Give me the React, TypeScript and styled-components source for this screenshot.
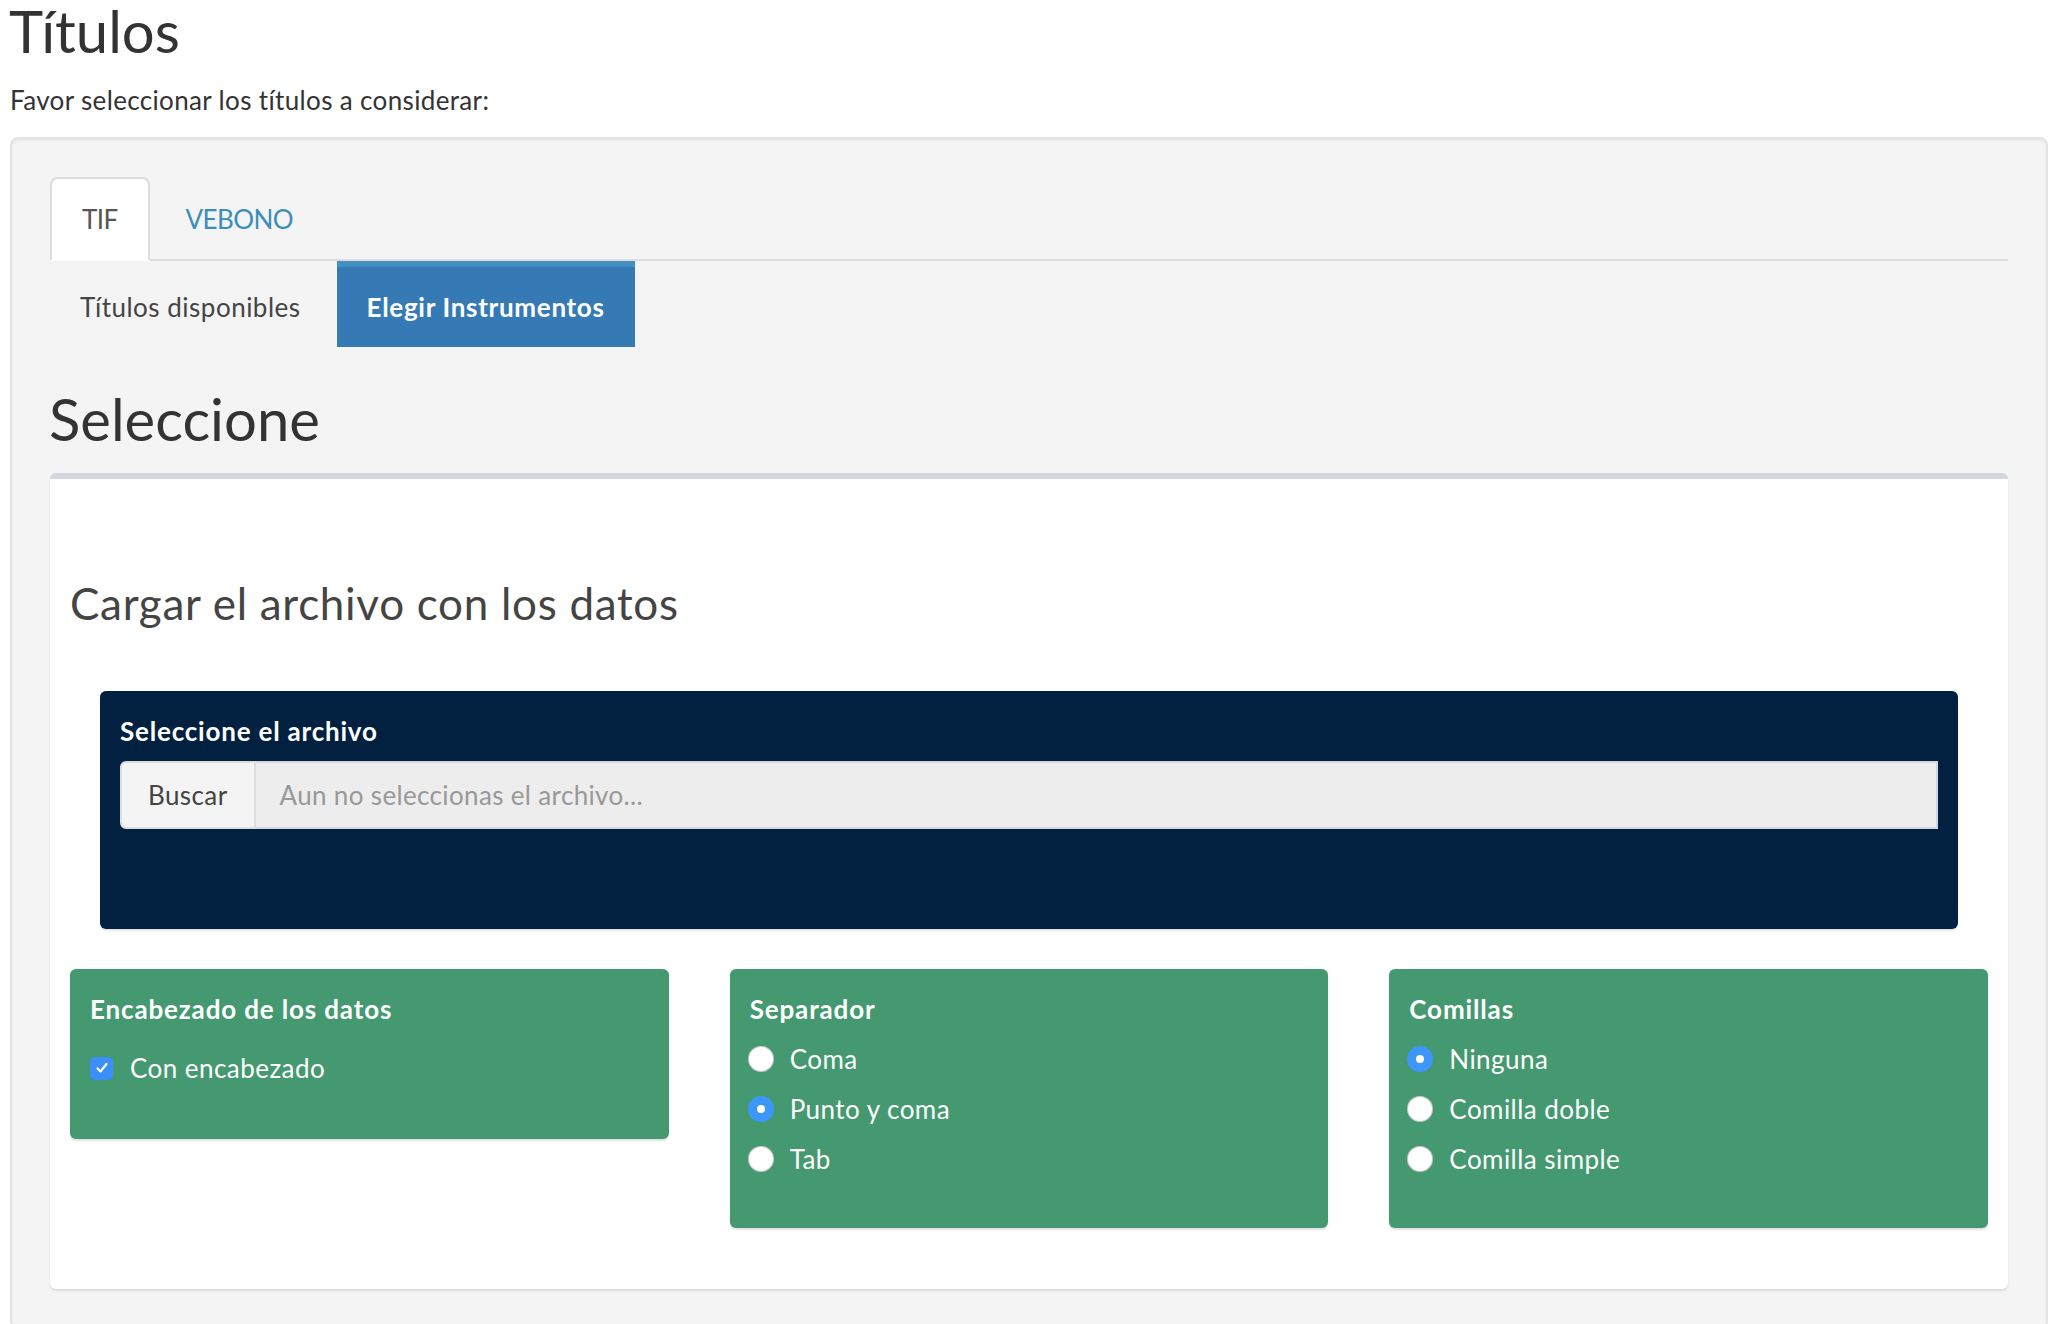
import React from 'react';
import styled, { createGlobalStyle } from 'styled-components';

const Global = createGlobalStyle`
  html, body { margin: 0; padding: 0; background: #fff; }
  body { font-family: Lato, "Liberation Sans", sans-serif; color: #333; }
  * { box-sizing: border-box; }
`;

const Page = styled.div`
  padding: 0 12px 0 10px;
`;

const PageTitle = styled.h2`
  margin: 0 0 0 -1px;
  font-size: 58px;
  line-height: 61px;
  font-weight: 400;
  color: #333;
`;

const Lead = styled.p`
  margin: 21px 0 19px;
  font-size: 26px;
  line-height: 36px;
  color: #333;
  letter-spacing: 0.35px;
`;

const Well = styled.div`
  background: #f4f4f4;
  border: 2px solid #e3e3e3;
  border-radius: 8px;
  box-shadow: inset 0 2px 2px rgba(0, 0, 0, 0.05);
  padding: 38px;
`;

const TabNav = styled.ul`
  display: flex;
  list-style: none;
  margin: 0;
  padding: 0;
  border-bottom: 2px solid #ddd;
`;

const Tab = styled.li<{ $active?: boolean }>`
  margin: 0 4px -2px 0;
  padding: 20px 30px;
  line-height: 40px;
  font-size: 26px;
  border: 2px solid ${(p) => (p.$active ? '#ddd' : 'transparent')};
  border-bottom-color: transparent;
  border-radius: 8px 8px 0 0;
  background: ${(p) => (p.$active ? '#fff' : 'transparent')};
  color: ${(p) => (p.$active ? '#555' : '#3c8dbc')};
  letter-spacing: -0.6px;
`;

const Pills = styled.ul`
  display: flex;
  list-style: none;
  margin: 0;
  padding: 0;
`;

const Pill = styled.li<{ $active?: boolean }>`
  margin-right: 6px;
  padding: 20px 30px;
  line-height: 40px;
  font-size: 26px;
  border-top: 6px solid ${(p) => (p.$active ? '#4290bf' : 'transparent')};
  background: ${(p) => (p.$active ? '#367ab5' : 'transparent')};
  color: ${(p) => (p.$active ? '#fff' : '#444')};
  font-weight: ${(p) => (p.$active ? 700 : 400)};
  letter-spacing: ${(p) => (p.$active ? '0.7px' : '0.5px')};
`;

const SectionTitle = styled.h2`
  margin: 41px 0 24px -1px;
  font-size: 58px;
  line-height: 61px;
  font-weight: 400;
  color: #333;
`;

const Box = styled.div`
  background: #fff;
  border-top: 6px solid #d2d6de;
  border-radius: 6px;
  box-shadow: 0 2px 2px rgba(0, 0, 0, 0.1);
  padding: 20px 20px 61px;
`;

const BoxHeading = styled.h3`
  margin: 79px 0 62px;
  font-size: 44px;
  line-height: 51px;
  font-weight: 400;
  color: #444;
  letter-spacing: 0.7px;
`;

const FilePanel = styled.div`
  margin: 0 30px;
  padding: 22px 20px 100px;
  background: #02203f;
  border-radius: 6px;
  box-shadow: 0 2px 2px rgba(0, 0, 0, 0.1);
`;

const PanelLabel = styled.div`
  font-size: 26px;
  line-height: 36px;
  font-weight: 700;
  color: #fff;
  margin-bottom: 12px;
  letter-spacing: 0.8px;
`;

const InputGroup = styled.div`
  display: flex;
  height: 68px;
`;

const BrowseButton = styled.span`
  display: flex;
  align-items: center;
  padding: 0 26px;
  background: #f4f4f4;
  border: 2px solid #ddd;
  border-radius: 6px 0 0 6px;
  font-size: 26px;
  color: #444;
  letter-spacing: 0.4px;
`;

const FileField = styled.span`
  flex: 1;
  display: flex;
  align-items: center;
  padding: 0 24px;
  background: #ededed;
  border: 2px solid #d2d6de;
  border-left: none;
  font-size: 26px;
  color: #999;
  letter-spacing: 0.35px;
`;

const OptionsRow = styled.div`
  display: grid;
  grid-template-columns: repeat(3, 1fr);
  column-gap: 61px;
  align-items: start;
  margin-top: 40px;
`;

const OptionCard = styled.div<{ $pad: number }>`
  background: #449970;
  border-radius: 6px;
  box-shadow: 0 2px 2px rgba(0, 0, 0, 0.12);
  padding: 22px 20px ${(p) => p.$pad}px;
  color: #fff;
`;

const CardTitle = styled.div<{ $gap: number }>`
  font-size: 26px;
  line-height: 36px;
  font-weight: 700;
  margin-bottom: ${(p) => p.$gap}px;
  letter-spacing: 0.85px;
`;

const OptionRow = styled.div<{ $gap: number }>`
  display: flex;
  align-items: center;
  gap: ${(p) => p.$gap}px;
  height: 50px;
  font-size: 26px;
  letter-spacing: 0.45px;
`;

const RadioDot = styled.span<{ $on?: boolean }>`
  position: relative;
  width: 26px;
  height: 26px;
  border-radius: 50%;
  flex: none;
  margin-left: -2px;
  background: ${(p) => (p.$on ? '#3d97fa' : 'radial-gradient(circle at 50% 40%, #fff 55%, #eee 100%)')};
  box-shadow: ${(p) => (p.$on ? 'none' : 'inset 0 0 0 1px rgba(0,0,0,0.22)')};
  &::after {
    content: '';
    display: ${(p) => (p.$on ? 'block' : 'none')};
    position: absolute;
    left: 9px;
    top: 9px;
    width: 8px;
    height: 8px;
    border-radius: 50%;
    background: #fff;
  }
`;

const CheckBox = styled.span`
  display: flex;
  align-items: center;
  justify-content: center;
  width: 23px;
  height: 23px;
  border-radius: 5px;
  background: #3c8ef8;
  flex: none;
`;

const Radio = ({ label, on }: { label: string; on?: boolean }) => (
  <OptionRow $gap={16}>
    <RadioDot $on={on} />
    <span>{label}</span>
  </OptionRow>
);

export default function App() {
  return (
    <>
      <Global />
      <Page>
        <PageTitle>Títulos</PageTitle>
        <Lead>Favor seleccionar los títulos a considerar:</Lead>
        <Well>
          <TabNav>
            <Tab $active>TIF</Tab>
            <Tab>VEBONO</Tab>
          </TabNav>
          <Pills>
            <Pill>Títulos disponibles</Pill>
            <Pill $active>Elegir Instrumentos</Pill>
          </Pills>
          <SectionTitle>Seleccione</SectionTitle>
          <Box>
            <BoxHeading>Cargar el archivo con los datos</BoxHeading>
            <FilePanel>
              <PanelLabel>Seleccione el archivo</PanelLabel>
              <InputGroup>
                <BrowseButton>Buscar</BrowseButton>
                <FileField>Aun no seleccionas el archivo...</FileField>
              </InputGroup>
            </FilePanel>
            <OptionsRow>
              <OptionCard $pad={46}>
                <CardTitle $gap={16}>Encabezado de los datos</CardTitle>
                <OptionRow $gap={17}>
                  <CheckBox>
                    <svg width="16" height="16" viewBox="0 0 16 16" fill="none">
                      <path d="M3.5 8.5 L6.5 11.5 L12.5 4" stroke="#fff" strokeWidth="2.2" strokeLinecap="round" strokeLinejoin="round" />
                    </svg>
                  </CheckBox>
                  <span>Con encabezado</span>
                </OptionRow>
              </OptionCard>
              <OptionCard $pad={44}>
                <CardTitle $gap={7}>Separador</CardTitle>
                <Radio label="Coma" />
                <Radio label="Punto y coma" on />
                <Radio label="Tab" />
              </OptionCard>
              <OptionCard $pad={44}>
                <CardTitle $gap={7}>Comillas</CardTitle>
                <Radio label="Ninguna" on />
                <Radio label="Comilla doble" />
                <Radio label="Comilla simple" />
              </OptionCard>
            </OptionsRow>
          </Box>
        </Well>
      </Page>
    </>
  );
}
